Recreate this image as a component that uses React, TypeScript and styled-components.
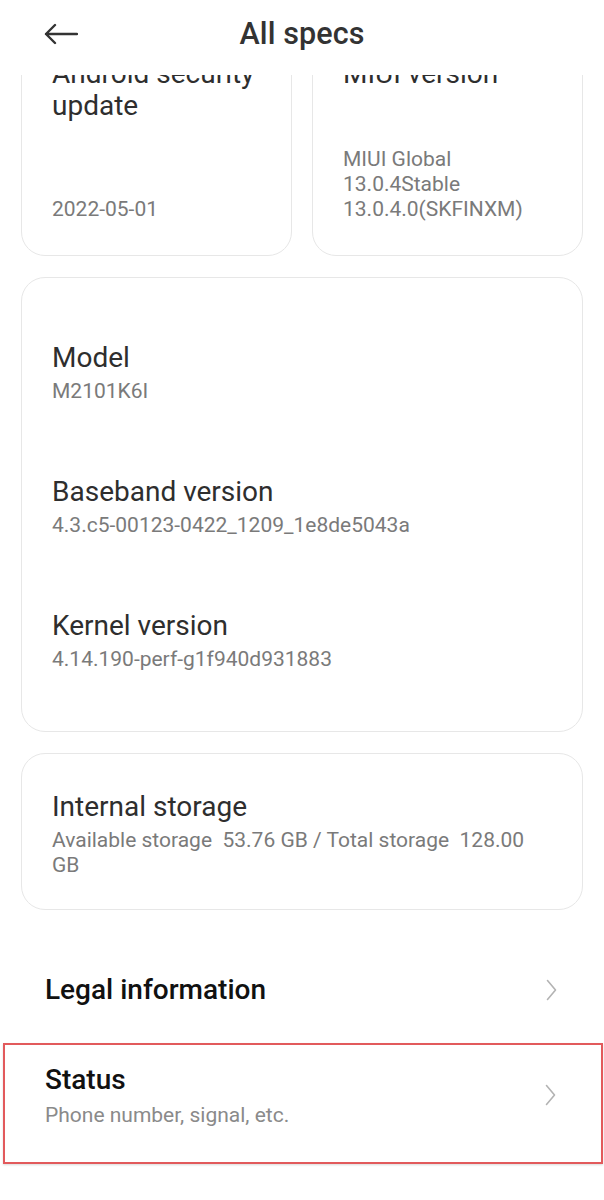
import React from 'react';
import styled, { createGlobalStyle } from 'styled-components';

const GlobalStyle = createGlobalStyle`
  html, body {
    margin: 0;
    padding: 0;
    background: #ffffff;
  }
  body {
    font-family: Roboto, "Noto Sans", "Liberation Sans", sans-serif;
    -webkit-font-smoothing: antialiased;
  }
  * { box-sizing: border-box; }
`;

const Screen = styled.div`
  width: 604px;
  height: 1200px;
  display: flex;
  flex-direction: column;
  background: #ffffff;
  overflow: hidden;
`;

const Header = styled.header`
  height: 75px;
  flex: 0 0 auto;
  display: grid;
  grid-template-columns: 90px 1fr 90px;
  align-items: center;
  background: #ffffff;
  padding-bottom: 8px;
`;

const BackButton = styled.button`
  border: 0;
  background: transparent;
  padding: 0 0 0 44px;
  height: 40px;
  display: flex;
  align-items: center;
  cursor: pointer;
`;

const Title = styled.h1`
  margin: 0;
  text-align: center;
  font-size: 30.5px;
  font-weight: 500;
  color: #333333;
  letter-spacing: 0.1px;
`;

const Viewport = styled.div`
  flex: 1 1 auto;
  overflow: hidden;
`;

/* content is scrolled up a little, the header hides the top */
const Scroller = styled.div<{ $offset: number }>`
  margin-top: ${(p) => -p.$offset}px;
  display: flex;
  flex-direction: column;
`;

const CardsArea = styled.div`
  padding: 0 21px;
  display: flex;
  flex-direction: column;
  gap: 21px;
`;

const TwoUp = styled.div`
  display: grid;
  grid-template-columns: 1fr 1fr;
  gap: 20px;
`;

const Card = styled.section<{ $pad?: string }>`
  background: #ffffff;
  border: 1px solid #e7e7e7;
  border-radius: 24px;
  padding: ${(p) => p.$pad || '34px 30px 33px'};
`;

const SmallCard = styled(Card)`
  height: 233px;
  display: flex;
  flex-direction: column;
  justify-content: space-between;
`;

const ItemList = styled.div`
  display: flex;
  flex-direction: column;
  gap: 67px;
`;

const SpecTitle = styled.div<{ $tight?: boolean }>`
  font-size: 28px;
  line-height: ${(p) => (p.$tight ? '32px' : '42px')};
  color: #2e2e2e;
`;

const SpecValue = styled.div`
  font-size: 21px;
  line-height: 25px;
  color: #7a7a7a;
`;

const Rows = styled.div`
  margin-top: 30px;
  display: flex;
  flex-direction: column;
`;

const Row = styled.div<{ $highlight?: boolean }>`
  display: flex;
  align-items: center;
  justify-content: space-between;
  padding: ${(p) => (p.$highlight ? '17px 45px 34px 40px' : '0 47px 0 45px')};
  min-height: ${(p) => (p.$highlight ? '121px' : '100px')};
  margin: ${(p) => (p.$highlight ? '3px 1px 0 3px' : '0')};
  border: ${(p) => (p.$highlight ? '2px solid #e25a5c' : '0')};
  box-shadow: ${(p) => (p.$highlight ? '0 1px 2px rgba(0,0,0,0.15)' : 'none')};
`;

const RowText = styled.div`
  display: flex;
  flex-direction: column;
  gap: 4px;
`;

const RowTitle = styled.div`
  font-size: 28px;
  line-height: 36px;
  font-weight: 500;
  color: #111111;
`;

const RowSub = styled.div`
  font-size: 21px;
  line-height: 26px;
  color: #8a8a8a;
`;

const BackArrow = () => (
  <svg width="34" height="22" viewBox="0 0 34 22" fill="none">
    <path d="M2 11H33M11 2L2 11L11 20" stroke="#333" strokeWidth="2.4" strokeLinecap="round" strokeLinejoin="round" />
  </svg>
);

const Chevron = () => (
  <svg width="11" height="22" viewBox="0 0 11 22" fill="none">
    <path d="M1.5 1.5L9.5 11L1.5 20.5" stroke="#b3b3b3" strokeWidth="1.6" strokeLinecap="round" strokeLinejoin="round" />
  </svg>
);

const specs = [
  { title: 'Model', value: 'M2101K6I' },
  { title: 'Baseband version', value: '4.3.c5-00123-0422_1209_1e8de5043a' },
  { title: 'Kernel version', value: '4.14.190-perf-g1f940d931883' },
];

export default function App() {
  return (
    <>
      <GlobalStyle />
      <Screen>
        <Header>
          <BackButton aria-label="Back">
            <BackArrow />
          </BackButton>
          <Title>All specs</Title>
          <span />
        </Header>
        <Viewport>
          <Scroller $offset={52}>
            <CardsArea>
              <TwoUp>
                <SmallCard>
                  <SpecTitle $tight>Android security update</SpecTitle>
                  <SpecValue>2022-05-01</SpecValue>
                </SmallCard>
                <SmallCard>
                  <SpecTitle $tight>MIUI version</SpecTitle>
                  <SpecValue>
                    MIUI Global
                    <br />
                    13.0.4Stable
                    <br />
                    13.0.4.0(SKFINXM)
                  </SpecValue>
                </SmallCard>
              </TwoUp>
              <Card $pad="59px 30px 59px">
                <ItemList>
                  {specs.map((s) => (
                    <div key={s.title}>
                      <SpecTitle>{s.title}</SpecTitle>
                      <SpecValue>{s.value}</SpecValue>
                    </div>
                  ))}
                </ItemList>
              </Card>
              <Card $pad="32px 30px 31px">
                <SpecTitle>Internal storage</SpecTitle>
                <SpecValue>Available storage&nbsp; 53.76 GB / Total storage&nbsp; 128.00 GB</SpecValue>
              </Card>
            </CardsArea>
            <Rows>
              <Row>
                <RowTitle>Legal information</RowTitle>
                <Chevron />
              </Row>
              <Row $highlight>
                <RowText>
                  <RowTitle>Status</RowTitle>
                  <RowSub>Phone number, signal, etc.</RowSub>
                </RowText>
                <Chevron />
              </Row>
            </Rows>
          </Scroller>
        </Viewport>
      </Screen>
    </>
  );
}
